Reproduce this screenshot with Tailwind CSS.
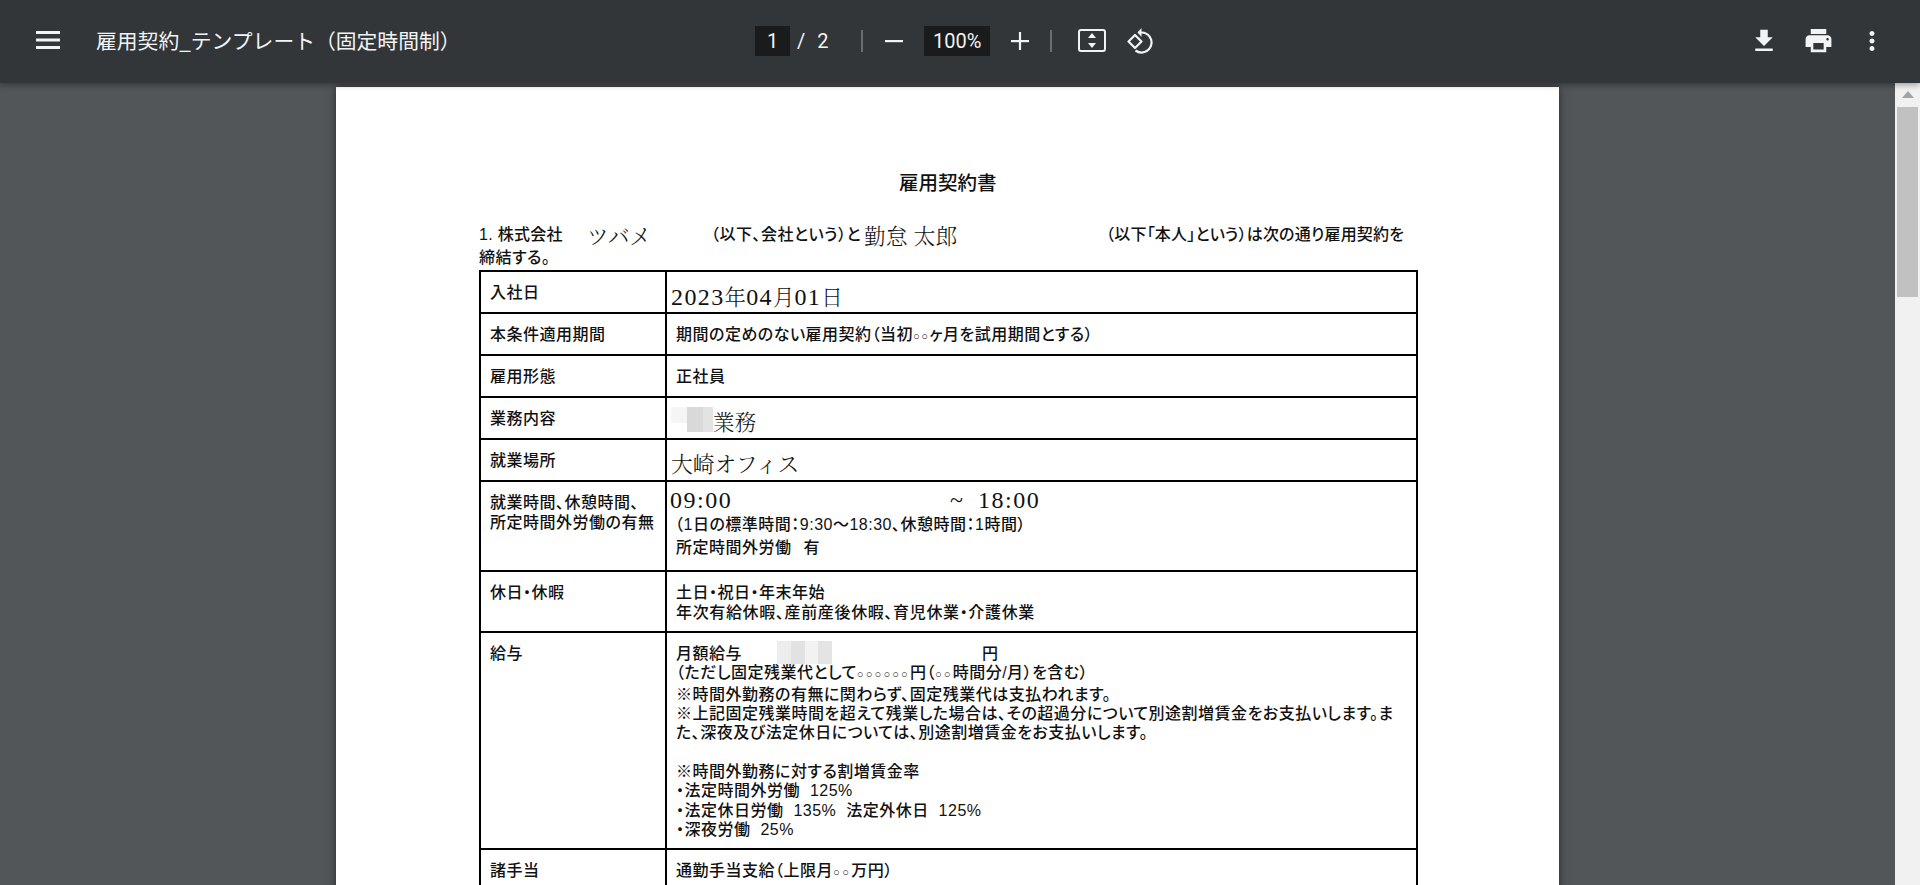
<!DOCTYPE html>
<html lang="ja">
<head>
<meta charset="utf-8">
<title>雇用契約_テンプレート（固定時間制）</title>
<script src="https://cdn.jsdelivr.net/npm/@tailwindcss/browser@4"></script>
</head>
<body class="h-screen overflow-hidden flex flex-col bg-[#525659] font-['Roboto','Noto_Sans_CJK_JP',sans-serif]">
<!-- Toolbar -->
<header class="relative z-10 h-[83px] shrink-0 pb-[2px] flex items-center bg-[#323639] text-[#f1f3f4] shadow-[0_2px_6px_rgba(0,0,0,0.35)]">
  <div class="w-[755px] shrink-0 flex items-center">
    <svg class="ml-[36px] w-[24px] h-[20px]" viewBox="0 0 24 20" fill="#f1f3f4"><rect y="1" width="24" height="3"/><rect y="8.5" width="24" height="3"/><rect y="16" width="24" height="3"/></svg>
    <span class="ml-[36px] text-[20.800px] leading-none whitespace-nowrap font-['Noto_Sans_CJK_JP',sans-serif]">雇用契約_テンプレート（固定時間制）</span>
  </div>
  <div class="w-[35px] h-[30px] flex items-center justify-center bg-[#191b1c] text-[20px]">1</div>
  <span class="ml-[7px] text-[20px]">/</span>
  <span class="ml-[12px] w-[44px] text-[20px]">2</span>
  <div class="w-[2px] h-[22px] bg-[#6b6e70]"></div>
  <svg class="ml-[22px] w-[18px] h-[18px]" viewBox="0 0 18 18" fill="#f1f3f4"><rect y="8" width="18" height="2.2"/></svg>
  <div class="ml-[21px] w-[66px] h-[30px] flex items-center justify-center bg-[#191b1c] text-[20px]">100%</div>
  <svg class="ml-[21px] w-[18px] h-[18px]" viewBox="0 0 18 18" fill="#f1f3f4"><rect y="8" width="18" height="2.2"/><rect x="7.9" width="2.2" height="18"/></svg>
  <div class="ml-[21px] w-[2px] h-[22px] bg-[#6b6e70]"></div>
  <svg class="ml-[26px] w-[28px] h-[23px]" viewBox="0 0 28 23"><rect x="1" y="1" width="26" height="21" rx="2" fill="none" stroke="#f1f3f4" stroke-width="2"/><path d="M14 4l4 5h-8zM14 19l4-5h-8z" fill="#f1f3f4"/></svg>
  <svg class="ml-[20px] w-[28px] h-[27px]" viewBox="0 0 28 27" fill="none" stroke="#f1f3f4" stroke-width="2.2"><path d="M2.500 14.500l6.500-6.500 6.500 6.500-6.500 6.500z" stroke-linejoin="round"/><path d="M12.500 5.500h3a10 10 0 1 1-6 18" /><path d="M15.500 1l-4 4.500 4 4.500z" fill="#f1f3f4" stroke="none"/></svg>
  <div class="flex-1"></div>
  <svg class="w-[30px] h-[30px] mr-[24px]" viewBox="0 0 24 24" fill="#f1f3f4"><path d="M19 9h-4V3H9v6H5l7 7 7-7zM5 18v2h14v-2H5z"/></svg>
  <svg class="w-[31px] h-[31px] mr-[23px]" viewBox="0 0 24 24" fill="#f1f3f4"><path d="M19 8H5c-1.660 0-3 1.340-3 3v6h4v4h12v-4h4v-6c0-1.660-1.340-3-3-3zm-3 11H8v-5h8v5zm3-7c-.55 0-1-.45-1-1s.45-1 1-1 1 .45 1 1-.45 1-1 1zm-1-9H6v4h12V3z"/></svg>
  <svg class="w-[30px] h-[30px] mr-[33px]" viewBox="0 0 24 24" fill="#f1f3f4"><path d="M12 8c1.100 0 2-.9 2-2s-.9-2-2-2-2 .9-2 2 .9 2 2 2zm0 2c-1.100 0-2 .9-2 2s.9 2 2 2 2-.9 2-2-.9-2-2-2zm0 6c-1.100 0-2 .9-2 2s.9 2 2 2 2-.9 2-2-.9-2-2-2z"/></svg>
</header>

<div class="flex-1 min-h-0 flex">
  <main class="flex-1 min-w-0 overflow-hidden pt-[4px] pl-[336px]">
    <!-- Document page -->
    <div class="w-[1223px] h-[1500px] bg-white shadow-[0_0_8px_rgba(0,0,0,0.5)] text-[#111] text-[16px] tracking-[0.5px] leading-[19.500px] font-medium [font-feature-settings:'palt'] font-['Liberation_Sans','Noto_Sans_CJK_JP',sans-serif] pl-[143px]">
      <h1 class="pt-[81px] pl-[420px] text-[19.500px] tracking-normal leading-[30px] font-medium">雇用契約書</h1>
      <div class="mt-[25px] h-[24px] flex items-center whitespace-nowrap">
        <span class="w-[108px] tracking-[0.3px]">1. 株式会社</span>
        <span class="w-[124px] text-[21.500px] tracking-normal [font-feature-settings:normal] font-light font-['Noto_Serif_CJK_JP','Noto_Sans_CJK_JP',serif]">ツバメ</span>
        <span class="w-[153px]">（以下、会社という）と</span>
        <span class="w-[242px] text-[21.500px] tracking-[0.4px] [font-feature-settings:normal] font-light font-['Noto_Serif_CJK_JP','Noto_Sans_CJK_JP',serif]">勤怠 太郎</span>
        <span class="tracking-[0.2px]">（以下「本人」という）は次の通り雇用契約を</span>
      </div>
      <p class="h-[23px] pt-[1px]">締結する。</p>
      <table class="w-[939px] table-fixed border-collapse border-2 border-black">
        <colgroup><col class="w-[186px]"><col></colgroup>
        <tbody>
          <tr class="h-[42px]">
            <td class="border-2 border-black align-top pl-[9px] pt-[11px]">入社日</td>
            <td class="border-2 border-black align-top pl-[4px] pt-[12px] text-[24px] leading-[26px] tracking-[1.400px] [font-feature-settings:normal] font-['Liberation_Serif','Noto_Serif_CJK_JP','Noto_Sans_CJK_JP',serif] font-light">2023<span class="text-[21.500px] tracking-normal">年</span>04<span class="text-[21.500px] tracking-normal">月</span>01<span class="text-[21.500px] tracking-normal">日</span></td>
          </tr>
          <tr class="h-[42px]">
            <td class="border-2 border-black align-top pl-[9px] pt-[11px]">本条件適用期間</td>
            <td class="border-2 border-black align-top pl-[9px] pt-[11px]">期間の定めのない雇用契約（当初<span class="text-[11px] tracking-[1.500px]">○○</span>ヶ月を試用期間とする）</td>
          </tr>
          <tr class="h-[42px]">
            <td class="border-2 border-black align-top pl-[9px] pt-[11px]">雇用形態</td>
            <td class="border-2 border-black align-top pl-[9px] pt-[11px]">正社員</td>
          </tr>
          <tr class="h-[42px]">
            <td class="border-2 border-black align-top pl-[9px] pt-[11px]">業務内容</td>
            <td class="border-2 border-black align-top pl-[4px] pt-[9px]">
              <div class="flex items-start h-[26px] text-[21.500px] tracking-normal [font-feature-settings:normal] leading-[28px] font-light font-['Noto_Serif_CJK_JP','Noto_Sans_CJK_JP',serif]">
                <div class="w-[16px] h-[16px] bg-[#f5f5f5]"></div>
                <div class="w-[16px] h-[25px] bg-[#d9d9d9]"></div>
                <div class="w-[10px] h-[25px] bg-[#e3e3e3]"></div>
                <span>業務</span>
              </div>
            </td>
          </tr>
          <tr class="h-[42px]">
            <td class="border-2 border-black align-top pl-[9px] pt-[11px]">就業場所</td>
            <td class="border-2 border-black align-top pl-[4px] pt-[10px] text-[21.800px] leading-[26px] tracking-normal [font-feature-settings:normal] font-light font-['Noto_Serif_CJK_JP','Noto_Sans_CJK_JP',serif]">大崎オフィス</td>
          </tr>
          <tr class="h-[90px]">
            <td class="border-2 border-black align-top pl-[9px] pt-[11px]">就業時間、休憩時間、<br>所定時間外労働の有無</td>
            <td class="border-2 border-black align-top pl-[3px] pt-[6px]">
              <div class="h-[26px] flex items-center text-[24px] tracking-[1.500px] font-normal font-['Liberation_Serif',serif]">
                <span class="w-[280px]">09:00</span><span class="w-[28px]">~</span><span>18:00</span>
              </div>
              <p class="pl-[5px] mt-[1px]">（1日の標準時間：9:30～18:30、休憩時間：1時間）</p>
              <p class="pl-[6px] mt-[3px]">所定時間外労働<span class="ml-[12px]">有</span></p>
            </td>
          </tr>
          <tr class="h-[61px]">
            <td class="border-2 border-black align-top pl-[9px] pt-[11px]">休日・休暇</td>
            <td class="border-2 border-black align-top pl-[9px] pt-[11px]">土日・祝日・年末年始<br><span class="tracking-[0.65px]">年次有給休暇、産前産後休暇、育児休業・介護休業</span></td>
          </tr>
          <tr class="h-[217px]">
            <td class="border-2 border-black align-top pl-[9px] pt-[11px]">給与</td>
            <td class="border-2 border-black align-top pl-[9px] pt-[11px] leading-[19.350px]">
              <div class="relative h-[19.350px] whitespace-nowrap">月額給与<span class="ml-[240px]">円</span>
                <div class="absolute left-[101px] -top-[3px] flex h-[23px]">
                  <div class="w-[14px] bg-[#ededed]"></div>
                  <div class="w-[14px] bg-[#e2e2e2]"></div>
                  <div class="w-[13px] bg-[#f2f2f2]"></div>
                  <div class="w-[14px] bg-[#e4e4e4]"></div>
                </div>
              </div>
              （ただし固定残業代として<span class="text-[11px] tracking-[2.200px]">○○○○○○</span>円（<span class="text-[11px] tracking-[2.200px]">○○</span>時間分/月）を含む）<br>
              ※時間外勤務の有無に関わらず、固定残業代は支払われます。<br>
              ※上記固定残業時間を超えて残業した場合は、その超過分について別途割増賃金をお支払いします。ま<br>
              た、深夜及び法定休日については、別途割増賃金をお支払いします。<br>
              <br>
              ※時間外勤務に対する割増賃金率<br>
              ・法定時間外労働&nbsp;&nbsp;125%<br>
              ・法定休日労働&nbsp;&nbsp;135%&nbsp;&nbsp;法定外休日&nbsp;&nbsp;125%<br>
              ・深夜労働&nbsp;&nbsp;25%
            </td>
          </tr>
          <tr class="h-[60px]">
            <td class="border-2 border-black align-top pl-[9px] pt-[11px]">諸手当</td>
            <td class="border-2 border-black align-top pl-[9px] pt-[11px]">通勤手当支給（上限月<span class="text-[11px] tracking-[2.500px]">○○</span>万円）</td>
          </tr>
        </tbody>
      </table>
    </div>
  </main>
  <!-- Scrollbar -->
  <aside class="w-[25px] shrink-0 bg-[#f1f1f1] flex flex-col items-center">
    <svg class="mt-[8px] w-[12px] h-[7px]" viewBox="0 0 12 7" fill="#a3a3a3"><path d="M6 0l6 7H0z"/></svg>
    <div class="mt-[9px] w-[21px] h-[190px] bg-[#c1c1c1]"></div>
  </aside>
</div>
</body>
</html>
